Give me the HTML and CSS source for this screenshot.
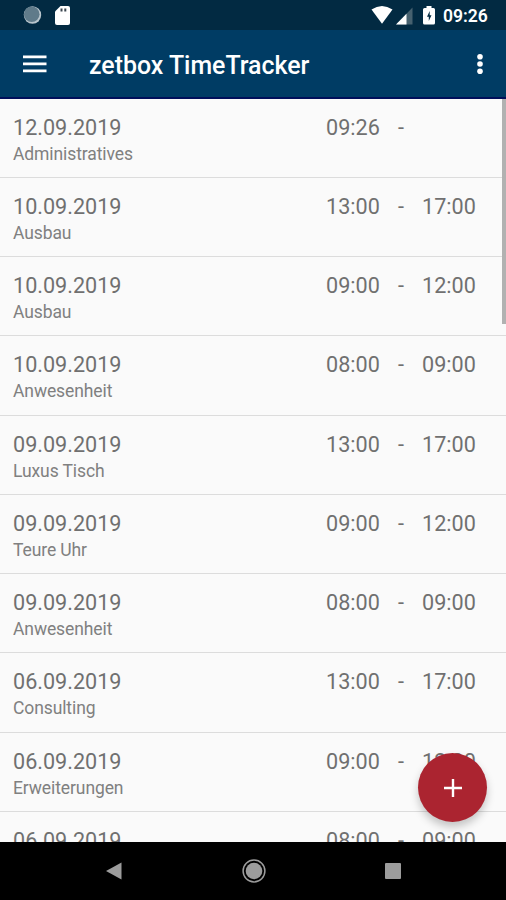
FILE: index.html
```html
<!DOCTYPE html>
<html lang="de">
<head>
    <meta charset="UTF-8">
    <meta name="viewport" content="width=device-width, initial-scale=1.0">
    <title>zetbox TimeTracker</title>
    <link rel="stylesheet" href="styles.css">
</head>
<body>
    <div class="screen">
        <!-- Status bar -->
        <div class="status-bar">
            <svg class="status-left" width="48" height="30" viewBox="0 0 48 30">
                <circle cx="9.5" cy="15" r="8.7" fill="#b9c5cc"/>
                <circle cx="8.7" cy="14.2" r="7.8" fill="#607b8a"/>
                <path d="M37.500 6H45q2 0 2 2v15q0 2-2 2H34q-2 0-2-2V11.500z" fill="#fff"/>
                <path d="M37.500 8.500h2v3h-2zM41.300 8.500h2v3h-2z" fill="#3b4650"/>
            </svg>
            <svg class="status-right" width="66" height="30" viewBox="0 0 66 30">
                <path d="M0.500 9.500Q11 2.500 21.500 9.500L11 23.800z" fill="#fff"/>
                <path d="M41.500 7.500V24.500H25z" fill="#46616f"/>
                <path d="M35.500 13.700V24.500H25z" fill="#fff"/>
                <path d="M55.500 6h5v2h2q1.500 0 1.500 1.500V23q0 1.500-1.500 1.500h-9Q52 24.500 52 23V9.500Q52 8 53.500 8h2z" fill="#fff"/>
                <path d="M58.700 11L56 16.700h1.800v4.300l2.700-5.800h-1.800z" fill="#022a42"/>
            </svg>
            <span class="clock">09:26</span>
        </div>

        <!-- Toolbar -->
        <div class="toolbar">
            <svg class="menu-icon" width="24" height="18" viewBox="0 0 24 18">
                <path d="M0 0.500h23.500v2.800H0zM0 7.500h23.500v2.800H0zM0 14.500h23.500v2.800H0z" fill="#fff"/>
            </svg>
            <h1 class="title">zetbox TimeTracker</h1>
            <svg class="more-icon" width="8" height="22" viewBox="0 0 8 22">
                <circle cx="4" cy="3.800" r="2.800" fill="#fff"/>
                <circle cx="4" cy="11" r="2.800" fill="#fff"/>
                <circle cx="4" cy="18.200" r="2.800" fill="#fff"/>
            </svg>
        </div>

        <!-- Time entries -->
        <div class="list">
            <div class="entry">
                <div class="info"><div class="date">12.09.2019</div><div class="project">Administratives</div></div>
                <span class="from">09:26</span><span class="dash">-</span><span class="to"></span>
            </div>
            <div class="entry">
                <div class="info"><div class="date">10.09.2019</div><div class="project">Ausbau</div></div>
                <span class="from">13:00</span><span class="dash">-</span><span class="to">17:00</span>
            </div>
            <div class="entry">
                <div class="info"><div class="date">10.09.2019</div><div class="project">Ausbau</div></div>
                <span class="from">09:00</span><span class="dash">-</span><span class="to">12:00</span>
            </div>
            <div class="entry">
                <div class="info"><div class="date">10.09.2019</div><div class="project">Anwesenheit</div></div>
                <span class="from">08:00</span><span class="dash">-</span><span class="to">09:00</span>
            </div>
            <div class="entry">
                <div class="info"><div class="date">09.09.2019</div><div class="project">Luxus Tisch</div></div>
                <span class="from">13:00</span><span class="dash">-</span><span class="to">17:00</span>
            </div>
            <div class="entry">
                <div class="info"><div class="date">09.09.2019</div><div class="project">Teure Uhr</div></div>
                <span class="from">09:00</span><span class="dash">-</span><span class="to">12:00</span>
            </div>
            <div class="entry">
                <div class="info"><div class="date">09.09.2019</div><div class="project">Anwesenheit</div></div>
                <span class="from">08:00</span><span class="dash">-</span><span class="to">09:00</span>
            </div>
            <div class="entry">
                <div class="info"><div class="date">06.09.2019</div><div class="project">Consulting</div></div>
                <span class="from">13:00</span><span class="dash">-</span><span class="to">17:00</span>
            </div>
            <div class="entry">
                <div class="info"><div class="date">06.09.2019</div><div class="project">Erweiterungen</div></div>
                <span class="from">09:00</span><span class="dash">-</span><span class="to">12:00</span>
            </div>
            <div class="entry">
                <div class="info"><div class="date">06.09.2019</div></div>
                <span class="from">08:00</span><span class="dash">-</span><span class="to">09:00</span>
            </div>
            <div class="scrollbar"></div>
            <button class="fab" aria-label="Neu">
                <svg width="18" height="18" viewBox="0 0 18 18">
                    <path d="M7.800 0h2.400v7.800H18v2.400h-7.800V18H7.800v-7.800H0V7.800h7.800z" fill="#fff"/>
                </svg>
            </button>
        </div>

        <!-- Navigation bar -->
        <div class="nav-bar">
            <svg width="16" height="18" viewBox="0 0 16 18">
                <path d="M0 9L15.500 0.500v17z" fill="#9c9c9c"/>
            </svg>
            <svg width="24" height="24" viewBox="0 0 24 24">
                <circle cx="12" cy="12" r="10.900" fill="none" stroke="#9c9c9c" stroke-width="1.500"/>
                <circle cx="12" cy="12" r="8.300" fill="#9c9c9c"/>
            </svg>
            <svg width="16" height="16" viewBox="0 0 16 16">
                <rect width="16" height="16" rx="1" fill="#9c9c9c"/>
            </svg>
        </div>
    </div>
</body>
</html>
```
FILE: styles.css
```css
body {
    margin: 0;
    font-family: Roboto, "Liberation Sans", sans-serif;
}
.screen {
    display: flex;
    flex-direction: column;
    width: 506px;
    height: 900px;
    overflow: hidden;
    background-color: #fafafa;
}
.status-bar {
    display: flex;
    align-items: center;
    flex: none;
    box-sizing: border-box;
    height: 30px;
    padding: 0 18px 0 23px;
    background-color: #022a42;
}
.status-right {
    margin-left: auto;
}
.clock {
    width: 45px;
    margin-left: 6px;
    padding-top: 2px;
    color: #fff;
    font-size: 17.5px;
    font-weight: 600;
    line-height: 30px;
    white-space: nowrap;
}
.toolbar {
    display: flex;
    align-items: center;
    flex: none;
    box-sizing: border-box;
    height: 68.5px;
    padding: 0 22px 0 23px;
    background-color: #003c64;
    border-bottom: 2px solid #000f5a;
}
.title {
    margin: 0 auto 0 42px;
    padding-top: 5px;
    color: #fff;
    font-size: 24.9px;
    font-weight: 500;
    line-height: 30px;
    white-space: nowrap;
}
.menu-icon, .more-icon {
    margin-top: 2px;
}
.list {
    position: relative;
    flex: 1;
    overflow: hidden;
}
.entry {
    display: flex;
    box-sizing: border-box;
    height: 79.25px;
    padding: 16px 30px 0 13px;
    border-bottom: 1.5px solid #dcdcdc;
    color: #707070;
    font-size: 21.6px;
    line-height: 26px;
}
.info {
    flex: 1;
}
.project {
    color: #808080;
    font-size: 17.5px;
    letter-spacing: -0.1px;
}
.from {
    width: 54px;
}
.dash {
    width: 42px;
    text-align: center;
}
.to {
    width: 54px;
}
.scrollbar {
    position: absolute;
    top: 0;
    right: 0;
    width: 4.5px;
    height: 225px;
    background-color: #b1b1b1;
}
.fab {
    position: absolute;
    right: 19px;
    bottom: 20px;
    display: flex;
    align-items: center;
    justify-content: center;
    width: 69px;
    height: 69px;
    padding: 0;
    border: none;
    border-radius: 50%;
    background-color: #ab2430;
    box-shadow: 0 5px 8px rgba(0, 0, 0, 0.22);
}
.nav-bar {
    display: flex;
    align-items: center;
    justify-content: space-between;
    flex: none;
    box-sizing: border-box;
    height: 58px;
    padding: 0 105px 0 106px;
    background-color: #000;
}
```
